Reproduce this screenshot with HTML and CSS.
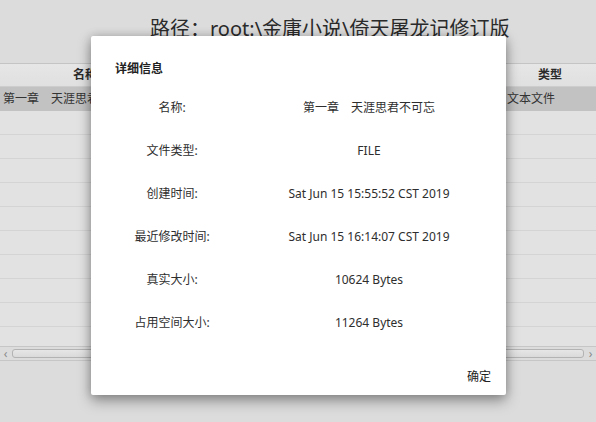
FILE: index.html
```html
<!DOCTYPE html>
<html lang="zh">
<head>
<meta charset="utf-8">
<title>详细信息</title>
<link rel="stylesheet" href="styles.css">
</head>
<body>
<div class="app">
  <h1 class="path">路径：root:\金庸小说\倚天屠龙记修订版</h1>
  <div class="table">
    <div class="thead">
      <div class="th col-name">名称</div>
      <div class="th col-mid"></div>
      <div class="th col-type">类型</div>
    </div>
    <div class="tbody">
      <div class="tr selected">
        <div class="td col-name">第一章　天涯思君不可忘</div>
        <div class="td col-mid"></div>
        <div class="td col-type">文本文件</div>
      </div>
      <div class="tr"></div>
      <div class="tr"></div>
      <div class="tr"></div>
      <div class="tr"></div>
      <div class="tr"></div>
      <div class="tr"></div>
      <div class="tr"></div>
      <div class="tr"></div>
      <div class="tr"></div>
      <div class="tr"></div>
      <div class="tr"></div>
    </div>
    <div class="hscroll">
      <span class="arrow">&#x2039;</span>
      <div class="thumb"></div>
      <span class="arrow">&#x203A;</span>
    </div>
  </div>
</div>

<div class="dialog">
  <div class="dialog-title">详细信息</div>
  <div class="info">
    <div class="label">名称:</div><div class="value">第一章　天涯思君不可忘</div>
    <div class="label">文件类型:</div><div class="value">FILE</div>
    <div class="label">创建时间:</div><div class="value">Sat Jun 15 15:55:52 CST 2019</div>
    <div class="label">最近修改时间:</div><div class="value">Sat Jun 15 16:14:07 CST 2019</div>
    <div class="label">真实大小:</div><div class="value">10624 Bytes</div>
    <div class="label">占用空间大小:</div><div class="value">11264 Bytes</div>
  </div>
  <div class="dialog-actions">
    <span class="btn">确定</span>
  </div>
</div>
</body>
</html>
```

FILE: styles.css
```css
* { box-sizing: border-box; }

html, body {
  margin: 0;
  padding: 0;
  width: 596px;
  height: 422px;
  overflow: hidden;
  background: #dcdcdc;
  font-family: "Noto Sans", "Noto Sans CJK SC", sans-serif;
  color: #2b2b2b;
}

.app {
  display: flex;
  flex-direction: column;
}

.path {
  margin: 0;
  height: 63px;
  padding: 16px 0 0 150px;
  font-weight: normal;
  font-size: 20px;
  line-height: 26px;
  color: #2a2a2a;
  white-space: nowrap;
}

.table {
  display: flex;
  flex-direction: column;
}

.thead {
  display: flex;
  height: 24px;
  border-top: 1px solid #c4c4c4;
  border-bottom: 1px solid #cdcdcd;
  background: linear-gradient(#e6e6e6, #e0e0e0);
}

.th {
  font-size: 12px;
  font-weight: bold;
  line-height: 22px;
  text-align: center;
  color: #2b2b2b;
}

.col-name { width: 170px; }
.col-mid { width: 334px; }
.col-type { width: 92px; }

.tbody {
  height: 259px;
  overflow: hidden;
  display: flex;
  flex-direction: column;
}

.tr {
  flex: none;
  display: flex;
  height: 24px;
  background: #e2e2e2;
  border-bottom: 1px solid #d4d4d4;
}

.tr.selected {
  background: #c2c2c2;
  border-bottom: 1px solid #c2c2c2;
}

.td {
  font-size: 12px;
  line-height: 23px;
  white-space: nowrap;
  color: #333;
}

.td.col-name { padding-left: 3px; }
.td.col-type { padding-left: 3px; }

.hscroll {
  display: flex;
  align-items: center;
  height: 15px;
  border-top: 1px solid #c6c6c6;
  border-bottom: 1px solid #c6c6c6;
  background: #dcdcdc;
  gap: 2px;
  padding: 0 1px;
}

.arrow {
  font-size: 12px;
  line-height: 12px;
  color: #8a8a8a;
  width: 9px;
  text-align: center;
}

.thumb {
  flex: 1;
  height: 9px;
  border: 1px solid #b3b3b3;
  border-radius: 3px;
  background: linear-gradient(#e6e6e6, #dadada);
}

.dialog {
  position: absolute;
  left: 91px;
  top: 36px;
  width: 415px;
  height: 359px;
  background: #ffffff;
  box-shadow: 0 6px 14px rgba(0, 0, 0, 0.35), 0 0 10px rgba(0, 0, 0, 0.18);
  border-radius: 2px;
  padding-top: 24px;
  display: flex;
  flex-direction: column;
}

.dialog-title {
  padding-left: 24px;
  font-size: 12px;
  font-weight: bold;
  line-height: 17px;
  color: #222;
}

.info {
  margin-top: 9px;
  display: grid;
  grid-template-columns: 162px 232px;
  grid-auto-rows: 43px;
}

.label, .value {
  font-size: 12px;
  line-height: 43px;
  text-align: center;
  white-space: nowrap;
  color: #2e2e2e;
}

.dialog-actions {
  margin-top: 24px;
  display: flex;
  justify-content: flex-end;
  padding-right: 15px;
}

.btn {
  font-size: 12px;
  line-height: 17px;
  color: #222;
}
```
